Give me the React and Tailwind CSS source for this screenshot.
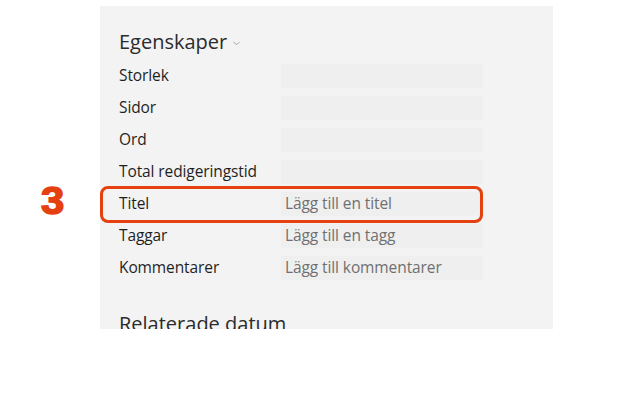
import { ChevronDown } from 'lucide-react';

const rows = [
  { label: 'Storlek', value: '' },
  { label: 'Sidor', value: '' },
  { label: 'Ord', value: '' },
  { label: 'Total redigeringstid', value: '' },
  { label: 'Titel', value: 'Lägg till en titel' },
  { label: 'Taggar', value: 'Lägg till en tagg' },
  { label: 'Kommentarer', value: 'Lägg till kommentarer' },
];

export default function App() {
  return (
    <div className="relative w-[631px] h-[402px] bg-white overflow-hidden" style={{ fontFamily: '"Open Sans", "Noto Sans", sans-serif' }}>
      <div className="ml-[100px] mt-[6px] w-[453px] h-[323px] bg-[#f3f3f3] overflow-hidden pl-[19px] pt-[22px]">
        {/* header */}
        <div className="flex items-center gap-1 h-[28px] mb-[4px]">
          <span className="text-[20px] leading-[28px] text-[#2b2b2b]">Egenskaper</span>
          <ChevronDown size={11} strokeWidth={2} className="text-[#9a9a9a] mt-[2px]" />
        </div>

        {rows.map(r => (
          <div key={r.label} className="flex items-center h-8">
            <span className="w-[162px] text-[15.5px] text-[#1f1f1f] tracking-[-0.1px]">{r.label}</span>
            <div className="w-[202px] h-[24px] bg-[#efefef] flex items-center pl-[4px]">
              <span className="text-[15.5px] text-[#707070] tracking-[-0.1px]">{r.value}</span>
            </div>
          </div>
        ))}

        <div className="mt-[26px] text-[20px] leading-[28px] text-[#2b2b2b]">Relaterade datum</div>
      </div>

      {/* annotation */}
      <div className="absolute left-[100px] top-[186px] w-[383px] h-[37px] border-[3px] border-[#e5400f] rounded-[8px]" />
      <div className="absolute left-[41px] top-[179px] text-[38px] leading-[44px] font-black text-[#e5400f] scale-x-110 origin-left" style={{ fontFamily: '"Liberation Sans", sans-serif', WebkitTextStroke: '1.5px #e5400f' }}>3</div>
    </div>
  );
}
